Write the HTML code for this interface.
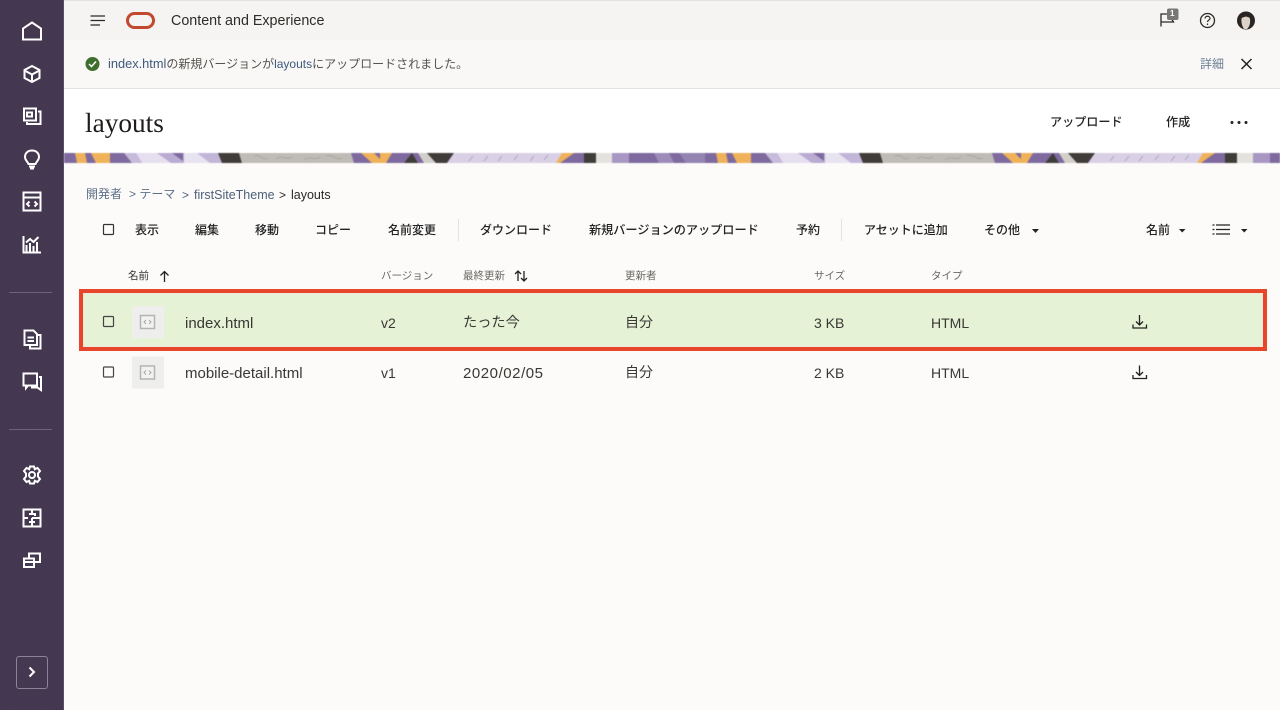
<!DOCTYPE html>
<html lang="ja"><head><meta charset="utf-8"><title>layouts</title>
<style>
html,body{margin:0;padding:0;width:1280px;height:710px;overflow:hidden;background:#fcfbfa}
body{position:relative;font-family:"Liberation Sans","Noto Sans CJK JP",sans-serif;color:#2b2926}
.t{position:absolute;white-space:nowrap;line-height:16px}
svg{position:absolute;overflow:hidden}
.tb{font-size:12px;color:#222;font-weight:500;top:222px}
.th{font-size:10.500px;color:#6a6763;top:268px}
.td{font-size:14px;color:#3a3835}
.i path,.i rect,.i circle{fill:none;stroke:#fff;stroke-width:2}
.ln{fill:none;stroke:#222;stroke-width:1.300}
a{color:#3c5a7d;text-decoration:none}
</style></head><body>
<!-- sidebar -->
<div style="position:absolute;left:0;top:0;width:63px;height:710px;background:#443750;background-image:repeating-linear-gradient(35deg,rgba(255,255,255,.012) 0 1px,transparent 1px 4px)"></div>
<div style="position:absolute;left:63px;top:0;width:1px;height:710px;background:#5a4e66"></div>
<svg class="i" style="left:0;top:0" width="64" height="710">
<path d="M23 39.500V28.500L32 22.500L41 28.500V39.500Z"/>
<path d="M32 66L39.500 70V78L32 82L24.500 78V70ZM24.500 70.500L32 74.500L39.500 70.500M32 74.500V82"/>
<path d="M24 108.500H36V120.500H24ZM27 112.500H32V116.500H27ZM38 111.500H40.500V124H27V122"/>
<path d="M32 150.500C36.500 150.500 39 153.500 39 157C39 160 36.500 161.500 35.500 164H28.500C27.500 161.500 25 160 25 157C25 153.500 27.500 150.500 32 150.500ZM29 166.500H35M30 168.500H34"/>
<rect x="23.500" y="192.500" width="17" height="18"/><path d="M23.500 197.500H40.500M29.500 201.500L27 204L29.500 206.500M34.500 201.500L37 204L34.500 206.500"/>
<path d="M23.500 236V252.500H41M26.500 252V245M30 252V243M33.500 252V246M37 252V242M26 242.500L30 239L33.500 242L38.500 237"/>
<path d="M24.500 330.500H33.500L37 334V345H24.500ZM27.500 337.500H34M27.500 341H34M37 335H40.500V348.500H30V345.500"/>
<path d="M23.500 373.500H37V385.500H28L26 388V385.500H23.500ZM39 377H41V390L37.500 387.500H31"/>
<path d="M30 466.500H34L34.800 469.200L37.500 468L40 471L38 473.500V476.500L40 479L37.500 482L34.800 480.800L34 483.500H30L29.200 480.800L26.500 482L24 479L26 476.500V473.500L24 471L26.500 468L29.200 469.200Z"/><circle cx="32" cy="475" r="3"/>
<rect x="23.500" y="509.500" width="17" height="17"/><path d="M32 509.500V514M32 518V526.500M23.500 518H28M32 518H40.500M29 514H35V516M29 522H35"/>
<path d="M24 558.500H34V567H24ZM29 558V553.500H40V562H34.500M24 562H34"/>
</svg>
<div style="position:absolute;left:9px;top:292px;width:43px;height:1px;background:#6e627a"></div>
<div style="position:absolute;left:9px;top:429px;width:43px;height:1px;background:#6e627a"></div>
<div style="position:absolute;left:16px;top:656px;width:30px;height:31px;border:1px solid #8d8398;border-radius:3px"></div>
<svg class="i" style="left:0;top:0" width="64" height="710"><path d="M29.500 667.500L34 672L29.500 676.500"/></svg>

<!-- top bar -->
<div style="position:absolute;left:64px;top:0;width:1216px;height:40px;background:#f5f4f2;border-top:1px solid #e2e1df;box-sizing:border-box"></div>
<div style="position:absolute;left:64px;top:40px;width:1216px;height:49px;background:#f9f8f6;border-bottom:1px solid #e3e2e0;box-sizing:border-box"></div>
<div style="position:absolute;left:64px;top:89px;width:1216px;height:64px;background:#fff"></div>
<svg style="left:0;top:0" width="1280" height="90">
<path d="M90.500 16H105M90.500 20.500H105M90.500 25H100" fill="none" stroke="#2b2926" stroke-width="1.300"/>
<rect x="127.500" y="13.500" width="26" height="14" rx="7" fill="none" stroke="#c2492f" stroke-width="3"/>
<path d="M1161 26.500V14H1173.500L1171 18L1173.500 22H1161" fill="none" stroke="#2b2926" stroke-width="1.300"/>
<rect x="1167" y="8.500" width="11.500" height="11.500" rx="2" fill="#777"/>
<circle cx="1207.500" cy="20.500" r="7" fill="none" stroke="#2b2926" stroke-width="1.300"/>
<path d="M1205 18.500C1205 15.500 1210 15.500 1210 18.500C1210 20 1207.500 20.200 1207.500 22M1207.500 23.500V25" fill="none" stroke="#2b2926" stroke-width="1.200"/>
<circle cx="1246" cy="20.500" r="9" fill="#2a2523"/>
<path d="M1241.500 19C1242 15.500 1249 15 1250 19C1250.500 23 1249.500 27 1247 29H1244C1242.500 27 1241 23 1241.500 19Z" fill="#dcd2c8"/>
<path d="M1241 18C1243 13.500 1249 13.500 1251 18L1246 16.500Z" fill="#2a2523"/>
<circle cx="92.500" cy="64" r="7" fill="#3f6f2d"/>
<path d="M89 64L91.500 66.500L96 61.500" fill="none" stroke="#fff" stroke-width="1.500"/>
<path d="M1241.500 59L1251.500 69M1251.500 59L1241.500 69" fill="none" stroke="#222" stroke-width="1.500"/>
</svg>
<div class="t" style="left:171px;top:13px;font-size:14.300px;color:#2e2c29">Content and Experience</div>
<div class="t" style="left:1170px;top:8px;width:6px;font-size:8px;line-height:12px;color:#fff;font-weight:700">1</div>
<div class="t" style="left:108px;top:56px;font-size:12px;color:#55534f"><a style="font-size:12.800px">index.html</a>の新規バージョンが<a>layouts</a>にアップロードされました。</div>
<div class="t" style="left:1200px;top:56px;font-size:12px;color:#6b7f96">詳細</div>

<!-- title -->
<div class="t" style="left:85px;top:107px;font-family:'Liberation Serif','Noto Serif CJK SC',serif;font-size:27.300px;line-height:32px;color:#1f1d1b">layouts</div>
<div class="t" style="left:1050px;top:114px;font-size:12.100px;color:#222;font-weight:500">アップロード</div>
<div class="t" style="left:1166px;top:114px;font-size:12.100px;color:#222;font-weight:500">作成</div>
<svg style="left:0;top:0" width="1280" height="130"><circle cx="1232" cy="122.500" r="1.500" fill="#222"/><circle cx="1239" cy="122.500" r="1.500" fill="#222"/><circle cx="1246" cy="122.500" r="1.500" fill="#222"/></svg>

<!-- banner -->
<svg style="left:64px;top:153px;filter:blur(.4px)" width="1216" height="10" viewBox="0 0 1216 10">
<defs><g id="tile">
<rect x="0" y="0" width="641" height="10" fill="#7e6a9e"/>
<path d="M11 0H21L23 10H13Z" fill="#efb25a"/>
<path d="M27 0H46V10H32Z" fill="#efb25a"/>
<path d="M60 0H72L78 10H68Z" fill="#c6bbda"/>
<path d="M72 0H93L110 10H78Z" fill="#e5dff0"/>
<path d="M93 0H120V10H107Z" fill="#b9abd2"/>
<path d="M108 0H119V8Z" fill="#7e6a9e"/>
<path d="M120 0H135L148 10H120Z" fill="#e8e3f1"/>
<path d="M133 0H155L158 10H146Z" fill="#c2b6d8"/>
<path d="M154 0H175L178 10H158Z" fill="#403c39"/>
<path d="M175 0H287L290 10H178Z" fill="#bfbcb7"/>
<path d="M190 3C196 0 198 8 204 5M212 6C218 1 222 8 228 4M240 7C246 2 250 8 256 4M262 3C268 0 272 8 278 5" fill="none" stroke="#a5a29d" stroke-width=".8"/>
<path d="M297 0H310L320 10H308Z" fill="#efb25a"/>
<path d="M316 0H328L322 10H316Z" fill="#efb25a"/>
<path d="M348 0L354 10H340Z" fill="#403c39"/>
<path d="M354 0H363L372 10H360Z" fill="#d2cfca"/>
<path d="M363 0H390L383 10H372Z" fill="#403c39"/>
<path d="M390 0H506L492 10H383Z" fill="#d9d0e6"/>
<path d="M405 8L409 3M420 8L424 3M434 8L438 3M450 7L454 2M466 8L470 3M480 7L484 2" fill="none" stroke="#a99cc0" stroke-width=".8"/>
<path d="M498 0H510L496 10H492Z" fill="#efb25a"/>
<rect x="520" y="0" width="12" height="10" fill="#403c39"/>
<rect x="532" y="0" width="16" height="10" fill="#e4e2de"/>
<rect x="548" y="0" width="17" height="10" fill="#a897c2"/>
<path d="M590 0H605L610 10H595Z" fill="#9d8cb9"/>
<path d="M615 0H641V10H622Z" fill="#9484b2"/>
</g></defs>
<use href="#tile"/><use href="#tile" transform="translate(641,0)"/>
</svg>

<!-- breadcrumb -->
<div class="t" style="left:86px;top:186px;font-size:12px;color:#5c7088">開発者</div>
<div class="t" style="left:129px;top:186px;font-size:12px;color:#5c7088">&gt; テーマ</div>
<div class="t" style="left:182px;top:187px;font-size:12px;color:#4c5f78">&gt;</div>
<div class="t" style="left:194px;top:187px;font-size:12.500px;color:#4c5f78">firstSiteTheme</div>
<div class="t" style="left:279px;top:187px;font-size:12px;color:#2b2926">&gt;</div>
<div class="t" style="left:291px;top:187px;font-size:12.500px;color:#2b2926">layouts</div>

<!-- toolbar -->
<svg style="left:0;top:0" width="1280" height="400">
<rect x="103.500" y="224.500" width="10" height="10" rx="1" fill="none" stroke="#333" stroke-width="1.200"/>
<rect x="458" y="219" width="1" height="22" fill="#e3e2e0"/><rect x="841" y="219" width="1" height="22" fill="#e3e2e0"/>
<path d="M1032 229H1039L1035.500 233Z" fill="#222"/>
<path d="M1179 229H1185.500L1182.200 232.500Z" fill="#222"/>
<path d="M1241 229H1247.500L1244.200 232.500Z" fill="#222"/>
<path d="M1216 225H1230M1216 229.500H1230M1216 234H1230M1212.500 225H1214.500M1212.500 229.500H1214.500M1212.500 234H1214.500" class="ln"/>
<path d="M164.500 282V271.500M160.500 275.500L164.500 271.500L168.500 275.500" class="ln"/>
<path d="M518 281V271M515 274L518 271L521 274M524 271V281M521 278L524 281L527 278" class="ln"/>
</svg>
<div class="t tb" style="left:135px">表示</div>
<div class="t tb" style="left:195px">編集</div>
<div class="t tb" style="left:255px">移動</div>
<div class="t tb" style="left:315px">コピー</div>
<div class="t tb" style="left:388px">名前変更</div>
<div class="t tb" style="left:480px">ダウンロード</div>
<div class="t tb" style="left:589px;font-size:12.150px">新規バージョンのアップロード</div>
<div class="t tb" style="left:796px">予約</div>
<div class="t tb" style="left:864px">アセットに追加</div>
<div class="t tb" style="left:984px">その他</div>
<div class="t tb" style="left:1146px">名前</div>

<!-- header -->
<div class="t th" style="left:128px;color:#333">名前</div>
<div class="t th" style="left:381px">バージョン</div>
<div class="t th" style="left:463px">最終更新</div>
<div class="t th" style="left:625px">更新者</div>
<div class="t th" style="left:814px">サイズ</div>
<div class="t th" style="left:931px">タイプ</div>

<!-- highlight row -->
<div style="position:absolute;left:79px;top:289px;width:1188px;height:62px;box-sizing:border-box;background:#e5f2d5;border:4.500px solid #e6462a;box-shadow:inset 0 0 0 1px #f3e7dc"></div>

<!-- rows -->
<svg style="left:0;top:0" width="1280" height="400">
<g><rect x="103.500" y="316.500" width="10" height="10" rx="1" fill="none" stroke="#444" stroke-width="1.200"/>
<rect x="132" y="306" width="32" height="32" fill="#eeeeec"/>
<rect x="140.500" y="315.500" width="14" height="13" fill="#f2f2f0" stroke="#b4b4b2" stroke-width="1.500"/>
<path d="M146 320L144 322L146 324M149 320L151 322L149 324" fill="none" stroke="#a8a8a6"/>
<path d="M1139.500 315V325M1136 321.500L1139.500 325L1143 321.500M1133 324.500V328H1146.500V324.500" class="ln"/></g>
<g transform="translate(0,50.500)"><rect x="103.500" y="316.500" width="10" height="10" rx="1" fill="none" stroke="#444" stroke-width="1.200"/>
<rect x="132" y="306" width="32" height="32" fill="#eeeeec"/>
<rect x="140.500" y="315.500" width="14" height="13" fill="#f2f2f0" stroke="#b4b4b2" stroke-width="1.500"/>
<path d="M146 320L144 322L146 324M149 320L151 322L149 324" fill="none" stroke="#a8a8a6"/>
<path d="M1139.500 315V325M1136 321.500L1139.500 325L1143 321.500M1133 324.500V328H1146.500V324.500" class="ln"/></g>
</svg>
<div class="t td" style="left:185px;top:316px;font-size:15px">index.html</div>
<div class="t td" style="left:381px;top:315px">v2</div>
<div class="t td" style="left:463px;top:315px;font-size:14.200px">たった今</div>
<div class="t td" style="left:625px;top:314px">自分</div>
<div class="t td" style="left:814px;top:315px">3 KB</div>
<div class="t td" style="left:931px;top:315px">HTML</div>
<div class="t td" style="left:185px;top:366px;font-size:15px">mobile-detail.html</div>
<div class="t td" style="left:381px;top:365px">v1</div>
<div class="t td" style="left:463px;top:366px;font-size:15px;letter-spacing:.55px">2020/02/05</div>
<div class="t td" style="left:625px;top:364px">自分</div>
<div class="t td" style="left:814px;top:365px">2 KB</div>
<div class="t td" style="left:931px;top:365px">HTML</div>
</body></html>
